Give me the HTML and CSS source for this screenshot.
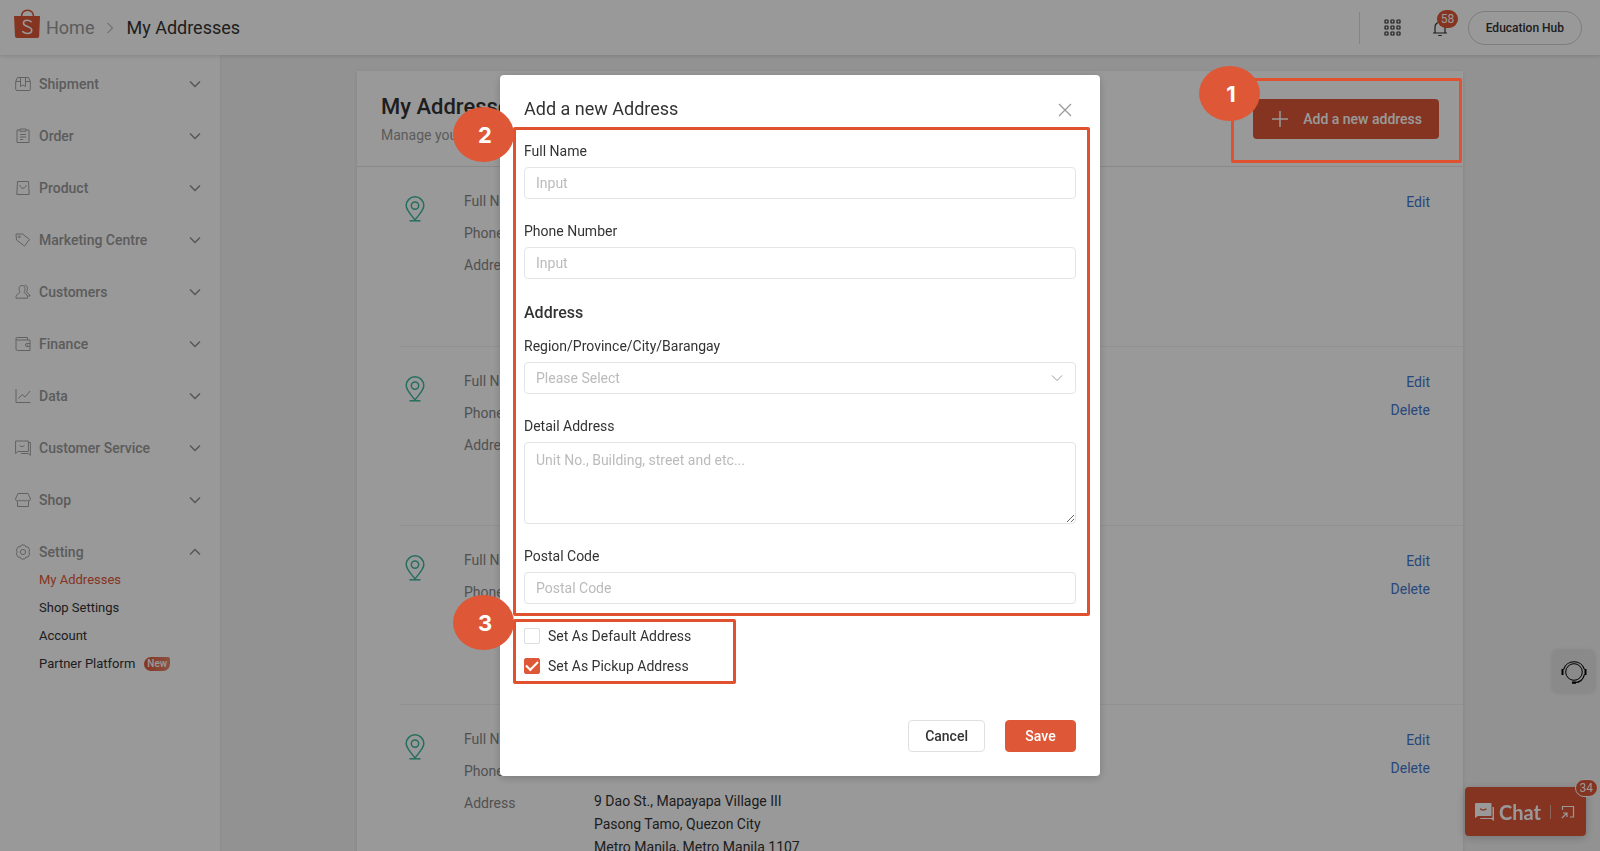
FILE: index.html
```html
<!DOCTYPE html>
<html lang="en">
<head>
<meta charset="utf-8">
<meta name="viewport" content="width=device-width, initial-scale=1">
<title>My Addresses</title>
<link rel="stylesheet" href="styles.css">
</head>
<body class="modal-open">

<svg class="sprite" aria-hidden="true">
  <symbol id="chevron" viewBox="0 0 12 12"><path d="M1 3.500 6 8.500 11 3.500"/></symbol>
  <symbol id="pin" viewBox="0 0 20 26"><path d="M10 24C6.500 19 1.200 14.500 1.200 9.600a8.800 8.800 0 0 1 17.600 0C18.800 14.500 13.500 19 10 24Z"/><circle cx="10" cy="9.600" r="3.700"/><path d="M4.500 24.800h11"/></symbol>
</svg>

<header class="topbar">
  <nav class="breadcrumb" aria-label="Breadcrumb">
    <a class="logo" href="#" aria-label="Shop home">
      <svg viewBox="0 0 28 30" width="28" height="30">
        <path d="M8.500 8C8.500 4 10.500 1.200 14.500 1.200S20.500 4 20.500 8" fill="none" stroke="#de5838" stroke-width="1.500"/>
        <path d="M1 7h26l-.8 20.200A2 2 0 0 1 24.200 29H4a2 2 0 0 1-2-1.800Z" fill="#de5838"/>
        <path d="M18 12.700c-1.200-1-2.400-1.400-3.800-1.400-2.200 0-3.700 1.100-3.700 2.900 0 3.800 8.200 2.600 8.200 6.800 0 2.200-1.900 3.500-4.300 3.500-1.800 0-3.400-.7-4.700-1.800" fill="none" stroke="#fff" stroke-width="1.600" stroke-linecap="round"/>
      </svg>
    </a>
    <a class="crumb" href="#">Home</a>
    <svg class="crumb-sep" viewBox="0 0 12 12"><use href="#chevron"/></svg>
    <span class="crumb-current">My Addresses</span>
  </nav>
  <div class="topbar-tools">
    <button class="icon-button" aria-label="Apps">
      <svg viewBox="0 0 17 17" width="17" height="17"><g><rect x="1" y="1" width="3" height="3" rx=".6"/><rect x="7" y="1" width="3" height="3" rx=".6"/><rect x="13" y="1" width="3" height="3" rx=".6"/><rect x="1" y="7" width="3" height="3" rx=".6"/><rect x="7" y="7" width="3" height="3" rx=".6"/><rect x="13" y="7" width="3" height="3" rx=".6"/><rect x="1" y="13" width="3" height="3" rx=".6"/><rect x="7" y="13" width="3" height="3" rx=".6"/><rect x="13" y="13" width="3" height="3" rx=".6"/></g></svg>
    </button>
    <button class="icon-button bell" aria-label="Notifications">
      <svg viewBox="0 0 16 18" width="16" height="18"><path d="M1 14h14M3 14V8a5 5 0 0 1 10 0v6M6.300 16.500h3.400"/></svg>
      <span class="count">58</span>
    </button>
    <button class="hub">Education Hub</button>
  </div>
</header>

<div class="layout">
  <nav class="sidebar" aria-label="Main">
    <button class="menu"><svg class="menu-icon" viewBox="0 0 16 16"><path d="M.7 5.500 2.500 1.500h11l1.800 4V13.300a1.200 1.200 0 0 1-1.200 1.200H1.900A1.200 1.200 0 0 1 .7 13.300ZM5.500 1.500v9L8 9l2.500 1.500v-9M.7 5.500h4.800M10.500 5.500h4.800"/></svg>Shipment<svg class="arrow"><use href="#chevron"/></svg></button>
    <button class="menu"><svg class="menu-icon" viewBox="0 0 16 16"><path d="M5 2H2v12.500h12V2h-3M5 1h6v2.300H5ZM5 6.500h6M5 9h6M5 11.500h3"/></svg>Order<svg class="arrow"><use href="#chevron"/></svg></button>
    <button class="menu"><svg class="menu-icon" viewBox="0 0 16 16"><path d="M2.500 1.500h11l.7 13H1.800ZM4.800 5c.4 2 1.500 3.200 3.200 3.200S10.800 7 11.200 5"/></svg>Product<svg class="arrow"><use href="#chevron"/></svg></button>
    <button class="menu"><svg class="menu-icon" viewBox="0 0 16 16"><path d="M1 2h6.500l7 5.500L9.500 14 1.500 8Z"/><circle cx="4.300" cy="4.800" r=".9"/></svg>Marketing Centre<svg class="arrow"><use href="#chevron"/></svg></button>
    <button class="menu"><svg class="menu-icon" viewBox="0 0 16 16"><path d="M7 1.500c2 0 3 1.400 3 3.200 0 1.900-.8 2.600-.8 3.600 0 1.500 3.300 1.600 3.300 4.200v1.700H1V12.500c0-2.500 3.800-2.700 3.800-4.200C4.800 7.300 4 6.600 4 4.700 4 2.900 5 1.500 7 1.500ZM9.500 1.200c2 0 3 1.500 3 3.300 0 1.500-1 2.500-1 3.400 0 1.300 3.500 1.800 3.500 4.100h-2.500"/></svg>Customers<svg class="arrow"><use href="#chevron"/></svg></button>
    <button class="menu"><svg class="menu-icon" viewBox="0 0 16 16"><path d="M1 3V13a1.500 1.500 0 0 0 1.500 1.500H15V4H2C.7 4 .7 1.500 2 1.500h10.500V4M15 7.500h-3a1.500 1.500 0 0 0 0 3h3M12 9h1"/></svg>Finance<svg class="arrow"><use href="#chevron"/></svg></button>
    <button class="menu"><svg class="menu-icon" viewBox="0 0 16 16"><path d="M1 1v13.500h14.500M3.500 10.500 7 6.500l3 2.500 5-6"/></svg>Data<svg class="arrow"><use href="#chevron"/></svg></button>
    <button class="menu"><svg class="menu-icon" viewBox="0 0 16 16"><path d="M.6 1h12.800v10.500H3L.6 13.500ZM13.400 2.500h2v12.800L13 13.500H6M4.500 5.500c1.500 1.500 3.500 1.500 5 0"/></svg>Customer Service<svg class="arrow"><use href="#chevron"/></svg></button>
    <button class="menu"><svg class="menu-icon" viewBox="0 0 16 16"><path d="M3 1.500h10L15.500 7a2.200 2.200 0 0 1-1.800 2c-1 0-1.500-.4-1.900-1-.4.600-1 1-1.900 1S8.400 8.600 8 8c-.4.600-1 1-1.900 1s-1.500-.4-1.900-1c-.4.600-.9 1-1.900 1A2.200 2.200 0 0 1 .5 7ZM2.500 9v5.500h11V9"/></svg>Shop<svg class="arrow"><use href="#chevron"/></svg></button>
    <button class="menu" aria-expanded="true"><svg class="menu-icon" viewBox="0 0 16 16"><path d="M6.300 1h3.400l.9 1.700 2.300.2 1.700 2.900L13.800 8l.8 2.200-1.700 2.900-2.300.2L9.700 15H6.300l-.9-1.700-2.300-.2-1.700-2.900L2.200 8l-.8-2.200 1.700-2.900 2.300-.2Z" stroke-linejoin="round"/><circle cx="8" cy="8" r="2.600"/></svg>Setting<svg class="arrow arrow-up"><use href="#chevron"/></svg></button>
    <ul class="submenu">
      <li><a class="sublink sublink-active" href="#" aria-current="page">My Addresses</a></li>
      <li><a class="sublink" href="#">Shop Settings</a></li>
      <li><a class="sublink" href="#">Account</a></li>
      <li><a class="sublink" href="#">Partner Platform</a><span class="tag-new">New</span></li>
    </ul>
  </nav>

  <main class="content">
    <section class="card">
      <div class="card-head">
        <div>
          <h1 class="card-title">My Addresses</h1>
          <p class="card-note">Manage your addresses</p>
        </div>
        <button class="add-button"><svg viewBox="0 0 16 16" width="16" height="16"><path d="M8 0v16M0 8h16" stroke="#fff" stroke-width="1.500"/></svg>Add a new address</button>
        <div class="ring ring-add"><span class="step">1</span></div>
      </div>

      <article class="address">
        <svg class="pin"><use href="#pin"/></svg>
        <dl class="facts"><dt>Full Name</dt><dd></dd><dt>Phone</dt><dd></dd><dt>Address</dt><dd></dd></dl>
        <div class="actions"><a href="#">Edit</a></div>
      </article>
      <article class="address">
        <svg class="pin"><use href="#pin"/></svg>
        <dl class="facts"><dt>Full Name</dt><dd></dd><dt>Phone</dt><dd></dd><dt>Address</dt><dd></dd></dl>
        <div class="actions"><a href="#">Edit</a><a href="#">Delete</a></div>
      </article>
      <article class="address">
        <svg class="pin"><use href="#pin"/></svg>
        <dl class="facts"><dt>Full Name</dt><dd></dd><dt>Phone</dt><dd></dd><dt>Address</dt><dd></dd></dl>
        <div class="actions"><a href="#">Edit</a><a href="#">Delete</a></div>
      </article>
      <article class="address">
        <svg class="pin"><use href="#pin"/></svg>
        <dl class="facts"><dt>Full Name</dt><dd></dd><dt>Phone</dt><dd></dd><dt>Address</dt><dd>9 Dao St., Mapayapa Village III<br>Pasong Tamo, Quezon City<br>Metro Manila, Metro Manila 1107</dd></dl>
        <div class="actions"><a href="#">Edit</a><a href="#">Delete</a></div>
      </article>
    </section>
  </main>
</div>

<button class="support" aria-label="Support">
  <svg viewBox="0 0 26 26" width="26" height="26"><g fill="none" stroke="#000"><circle cx="13" cy="13" r="8.300" stroke-width="1"/><path d="M2.500 10.500a11 11 0 0 1 21 0M23.500 15.500c-1.300 5-5 8-9.500 8" stroke-width="1.100"/></g><path d="M.5 10h2v6H.5zM23.500 10h2v6h-2zM11 22.500h4v2.200h-4z"/></svg>
</button>
<button class="chat">
  <svg viewBox="0 0 19 18" width="19" height="18"><path fill="#fff" d="M1 0h14.500a1 1 0 0 1 1 1v11a1 1 0 0 1-1 1H3l-3 2V1a1 1 0 0 1 1-1ZM17.500 4H19v14l-2.800-2H6a1 1 0 0 1-1-1h11.500a1 1 0 0 0 1-1Z"/><path d="M5 5.800c2 1.500 4.500 1.500 6.500 0" fill="none" stroke="#de5838" stroke-width="1.200"/></svg>
  <span>Chat</span>
  <svg class="popout" viewBox="0 0 14 14" width="14" height="14"><path d="M1.500 5V1.500h11v10.500H9M1 13l5-5M2 8h4v4" fill="none" stroke="#fff" stroke-width="1.200"/></svg>
  <span class="count chat-count">34</span>
</button>

<div class="overlay">
  <form class="modal" role="dialog" aria-labelledby="modal-title">
    <div class="modal-head">
      <h2 class="modal-title" id="modal-title">Add a new Address</h2>
      <button class="close" type="button" aria-label="Close"><svg viewBox="0 0 14 14" width="14" height="14"><path d="m1 1 12 12M13 1 1 13" stroke="#999" stroke-width="1.200"/></svg></button>
    </div>

    <div class="fields">
      <div class="ring ring-fields"><span class="step">2</span></div>
      <div class="field">
        <label for="name">Full Name</label>
        <input class="control" id="name" type="text" placeholder="Input">
      </div>
      <div class="field">
        <label for="phone">Phone Number</label>
        <input class="control" id="phone" type="tel" placeholder="Input">
      </div>
      <div class="group">
        <h3 class="group-title">Address</h3>
        <div class="field">
          <label for="region">Region/Province/City/Barangay</label>
          <div class="select-box">
            <select class="control select" id="region"><option>Please Select</option></select>
            <svg class="select-arrow"><use href="#chevron"/></svg>
          </div>
        </div>
      </div>
      <div class="field">
        <label for="detail">Detail Address</label>
        <textarea class="control textarea" id="detail" placeholder="Unit No., Building, street and etc..."></textarea>
      </div>
      <div class="field">
        <label for="postal">Postal Code</label>
        <input class="control" id="postal" type="text" placeholder="Postal Code">
      </div>
    </div>

    <div class="checks">
      <div class="ring ring-checks"><span class="step">3</span></div>
      <label class="check"><input class="box" type="checkbox">Set As Default Address</label>
      <label class="check"><input class="box" type="checkbox" checked>Set As Pickup Address</label>
    </div>

    <div class="modal-foot">
      <button class="button" type="button">Cancel</button>
      <button class="button button-primary" type="submit">Save</button>
    </div>
  </form>
</div>
</body>
</html>
```
FILE: styles.css
```css
:root {
  --accent: #de5838;
  --text: #333;
  --muted: #999;
  --line: #e4e4e4;
}

* { box-sizing: border-box; }

body {
  margin: 0;
  background: #f4f4f4;
  color: var(--text);
  font: 14px/24px Roboto, "Liberation Sans", sans-serif;
}

.modal-open { height: 100vh; overflow: hidden; }

button, input, select, textarea { font: inherit; color: inherit; }
button { padding: 0; border: 0; background: none; }
a { color: inherit; text-decoration: none; }
h1, h2, h3, p, ul, dl, dd { margin: 0; padding: 0; }
ul { list-style: none; }
svg { flex: none; }
.sprite { position: absolute; width: 0; height: 0; }

/* Top bar */
.topbar {
  position: relative;
  display: flex;
  align-items: center;
  justify-content: space-between;
  height: 55px;
  padding: 0 18px 0 13px;
  background: #fff;
  box-shadow: 0 1px 4px rgba(0, 0, 0, .15);
}
.breadcrumb { display: flex; align-items: center; font-size: 18px; }
.logo { height: 38px; margin-right: 5px; }
.crumb { color: var(--muted); }
.crumb-sep {
  width: 12px;
  height: 12px;
  margin: 0 10px;
  fill: none;
  stroke: var(--muted);
  transform: rotate(-90deg);
}
.topbar-tools {
  display: flex;
  align-items: center;
  height: 32px;
  padding-left: 24px;
  border-left: 1px solid #ddd;
}
.icon-button { display: flex; fill: none; stroke: var(--text); stroke-width: 1.200; }
.bell { position: relative; margin: 0 20px 0 31px; }
.count {
  position: absolute;
  top: -9px;
  left: 5px;
  height: 18px;
  padding: 0 4px;
  border-radius: 9px;
  background: var(--accent);
  color: #fff;
  font-size: 12px;
  line-height: 18px;
}
.hub {
  height: 34px;
  padding: 0 17px;
  border: 1px solid #d0d0d0;
  border-radius: 17px;
  font-size: 12px;
  font-weight: 500;
}

/* Sidebar */
.layout { display: flex; align-items: stretch; }
.sidebar {
  flex: 0 0 220px;
  display: flex;
  flex-direction: column;
  gap: 28px;
  min-height: calc(100vh - 55px);
  padding: 17px 19px 20px 15px;
  background: #fff;
  box-shadow: 0 0 3px rgba(0, 0, 0, .08);
}
.menu {
  display: flex;
  align-items: center;
  height: 24px;
  color: var(--muted);
  font-weight: 500;
}
.menu-icon {
  width: 16px;
  height: 16px;
  margin-right: 8px;
  fill: none;
  stroke: #a4a4a4;
}
.arrow {
  width: 12px;
  height: 12px;
  margin-left: auto;
  fill: none;
  stroke: #909090;
  stroke-width: 1.500;
}
.arrow-up { transform: rotate(180deg); }
.submenu { margin-top: -26px; padding-left: 24px; font-size: 13px; line-height: 28px; }
.submenu li { display: flex; align-items: center; gap: 9px; }
.sublink-active { color: var(--accent); }
.tag-new {
  padding: 0 3px;
  border-radius: 7px 2px 7px 7px;
  background: linear-gradient(90deg, #de5838, #e88a70);
  color: #fff;
  font-size: 10px;
  font-weight: 500;
  line-height: 14px;
}

/* Address list */
.content { flex: 1; padding: 16px 137px 0; }
.card { background: #fff; box-shadow: 0 1px 4px rgba(0, 0, 0, .1); }
.card-head {
  position: relative;
  display: flex;
  align-items: center;
  justify-content: space-between;
  height: 96px;
  padding: 0 24px;
  border-bottom: 1px solid var(--line);
}
.card-title { font-size: 22px; font-weight: 500; line-height: 32px; }
.card-note { color: var(--muted); }
.add-button {
  display: flex;
  align-items: center;
  gap: 15px;
  height: 40px;
  padding: 0 17px 0 19px;
  border-radius: 4px;
  background: var(--accent);
  color: #fff;
  font-weight: 500;
}
.address { display: flex; min-height: 179px; margin-left: 43px; padding: 18px 33px 0 5px; }
.address + .address { border-top: 1px solid #f2f2f2; }
.pin {
  width: 20px;
  height: 26px;
  margin: 11px 39px 0 0;
  fill: none;
  stroke: #40b89e;
  stroke-width: 1.500;
}
.facts {
  flex: 1;
  display: grid;
  grid-template-columns: 130px 1fr;
  align-content: start;
  row-gap: 9px;
  padding-top: 5px;
  line-height: 23px;
}
.facts dt { color: #888; }
.facts dd { margin-top: -2px; }
.actions {
  display: flex;
  flex-direction: column;
  align-items: flex-end;
  padding-top: 3px;
  color: #4478d0;
  line-height: 28px;
}

/* Floating tools */
.support {
  position: fixed;
  right: 6px;
  bottom: 159px;
  display: flex;
  align-items: center;
  justify-content: center;
  width: 41px;
  height: 41px;
  border-radius: 4px;
  background: #e6e6e6;
  box-shadow: 0 0 5px rgba(0, 0, 0, .15);
}
.chat {
  position: fixed;
  right: 14px;
  bottom: 15px;
  display: flex;
  align-items: center;
  gap: 5px;
  height: 49px;
  padding: 0 11px 0 10px;
  border-radius: 4px;
  background: var(--accent);
  box-shadow: 0 2px 8px rgba(0, 0, 0, .2);
  color: #fff;
  font: 700 20px/24px Lato, sans-serif;
}
.popout { box-sizing: content-box; margin-left: 4px; padding-left: 10px; border-left: 1px solid #eba795; }
.chat-count {
  top: -8px;
  right: -12px;
  left: auto;
  border: 1px solid #fff;
  font: 12px/16px Roboto, sans-serif;
}

/* Dialog */
.overlay {
  position: fixed;
  inset: 0;
  z-index: 10;
  display: flex;
  align-items: center;
  justify-content: center;
  background: rgba(0, 0, 0, .4);
}
.modal {
  width: 600px;
  max-width: 100%;
  padding: 22px 24px 24px;
  border-radius: 4px;
  background: #fff;
  box-shadow: 0 2px 8px rgba(0, 0, 0, .2);
}
.modal-head { display: flex; justify-content: space-between; align-items: center; padding-right: 4px; }
.modal-title { font-size: 18px; font-weight: 400; line-height: 24px; }
.close { display: flex; padding-top: 2px; }
.fields { position: relative; display: flex; flex-direction: column; gap: 20px; margin-top: 18px; }
.field { display: flex; flex-direction: column; gap: 4px; }
.group { display: flex; flex-direction: column; gap: 7px; }
.group-title { font-size: 16px; font-weight: 500; line-height: 28px; }
.control {
  width: 100%;
  height: 32px;
  padding: 0 11px;
  border: 1px solid #e4e4e4;
  border-radius: 4px;
  background: #fff;
}
.control::placeholder { color: #bbb; opacity: 1; }
.select-box { position: relative; display: flex; }
.select { appearance: none; color: #bbb; }
.select-arrow {
  position: absolute;
  top: 10px;
  right: 13px;
  width: 12px;
  height: 12px;
  fill: none;
  stroke: #999;
  pointer-events: none;
}
.textarea { display: block; height: 82px; padding-top: 5px; resize: vertical; }
.checks { position: relative; display: flex; flex-direction: column; align-items: flex-start; gap: 6px; margin-top: 20px; }
.check { display: flex; align-items: center; gap: 8px; }
.box {
  appearance: none;
  width: 16px;
  height: 16px;
  margin: 0;
  border: 1px solid #ddd;
  border-radius: 2px;
}
.box:checked { display: grid; place-items: center; border-color: var(--accent); background: var(--accent); }
.box:checked::before {
  content: "";
  width: 10px;
  height: 5px;
  margin-bottom: 3px;
  border: solid #fff;
  border-width: 0 0 2px 2px;
  transform: rotate(-45deg);
}
.modal-foot { display: flex; justify-content: flex-end; gap: 20px; margin-top: 42px; }
.button {
  height: 32px;
  min-width: 71px;
  padding: 0 16px;
  border: 1px solid #e0e0e0;
  border-radius: 4px;
  background: #fff;
  font-weight: 500;
}
.button-primary { border-color: var(--accent); background: var(--accent); color: #fff; }

/* Guide markers */
.ring {
  position: absolute;
  z-index: 20;
  border: 3px solid #e0512f;
  border-radius: 2px;
  pointer-events: none;
}
.ring-add { top: 7px; right: 1px; bottom: 3px; width: 231px; }
.ring-fields { inset: -12px -14px -12px -11px; }
.ring-checks { top: -5px; bottom: -6px; left: -11px; width: 223px; }
.step {
  position: absolute;
  top: -23px;
  left: -63px;
  display: grid;
  place-items: center;
  width: 61px;
  height: 55px;
  padding-left: 3px;
  border-radius: 50%;
  background: var(--accent);
  color: #fff;
  font: 700 22px/24px Inter, sans-serif;
}
.ring-add .step { top: -15px; left: -35px; }
.ring-checks .step { top: -27px; }
```
